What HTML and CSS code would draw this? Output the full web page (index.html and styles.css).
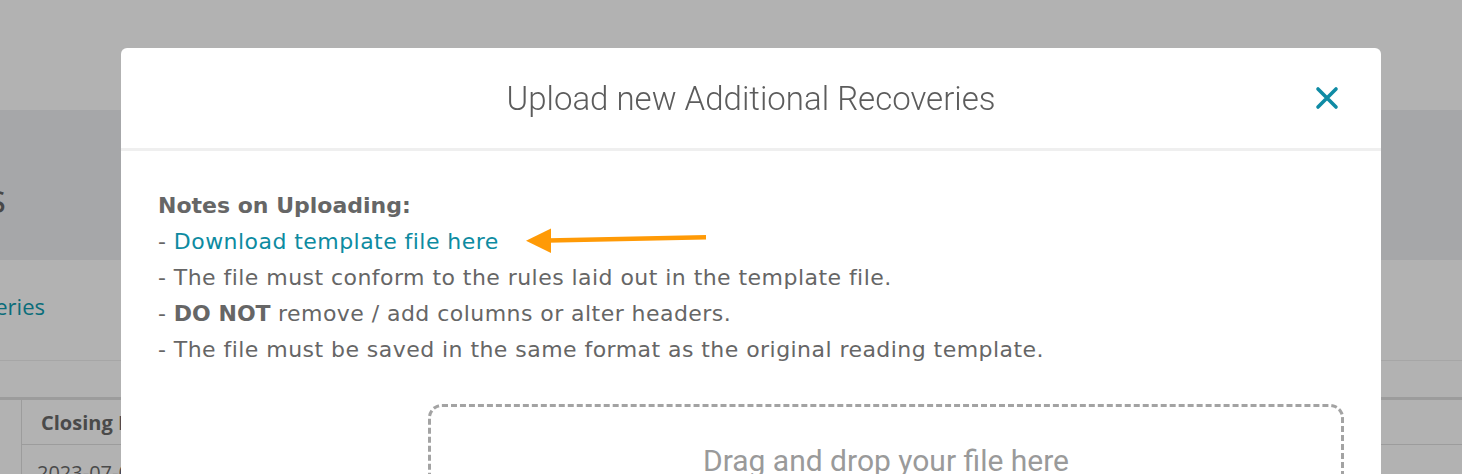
FILE: index.html
```html
<!DOCTYPE html>
<html lang="en">
<head>
<meta charset="utf-8">
<title>Upload new Additional Recoveries</title>
<link rel="stylesheet" href="styles.css">
</head>
<body>
<div class="page">
  <header class="topbar"></header>
  <section class="hero">
    <div class="clip"><h1 class="page-title">Additional Recoveries</h1></div>
  </section>
  <nav class="tabs">
    <div class="clip"><a class="tab-link" href="#">Additional Recoveries</a></div>
  </nav>
  <div class="spacer"></div>
  <table class="grid">
    <thead>
      <tr><th class="cell-first"></th><th class="cell-head">Closing Date</th></tr>
    </thead>
    <tbody>
      <tr><td class="cell-first"></td><td class="cell-body">2023-07-01</td></tr>
    </tbody>
  </table>
</div>

<div class="overlay"></div>

<div class="modal">
  <div class="modal-header">
    <h2 class="modal-title">Upload new Additional Recoveries</h2>
    <button class="close-btn" aria-label="Close">
      <svg width="24" height="24" viewBox="0 0 24 24"><path d="M3 3 L21 21 M21 3 L3 21" stroke="#0f8ba4" stroke-width="3.6" stroke-linecap="round" fill="none"/></svg>
    </button>
  </div>
  <div class="modal-body">
    <div class="notes">
      <div class="notes-title">Notes on Uploading:</div>
      <div class="note-line">- <a class="dl-link" href="#">Download template file here</a><svg class="arrow" width="184" height="28" viewBox="0 0 184 28"><path d="M22 14.6 L180 11.3" stroke="#ff9a06" stroke-width="4.5" fill="none"/><path d="M0 14.8 L25 2.5 L25 27 Z" fill="#ff9a06"/></svg></div>
      <div class="note-line">- The file must conform to the rules laid out in the template file.</div>
      <div class="note-line">- <strong>DO NOT</strong> remove / add columns or alter headers.</div>
      <div class="note-line">- The file must be saved in the same format as the original reading template.</div>
    </div>
    <div class="upload-row">
      <div></div>
      <div class="dropzone">Drag and drop your file here</div>
    </div>
  </div>
</div>
</body>
</html>
```

FILE: styles.css
```css
html, body {
  margin: 0;
  padding: 0;
  height: 100%;
  overflow: hidden;
  background: #ffffff;
}

body {
  font-family: "DejaVu Sans", "Open Sans", sans-serif;
}

.page {
  width: 100%;
}

.topbar {
  height: 110px;
  background: #ffffff;
}

.hero {
  height: 150px;
  background: #eef0f3;
  display: flex;
  align-items: center;
}

.clip {
  display: flex;
  justify-content: flex-end;
  white-space: nowrap;
}

.hero .clip {
  width: 6px;
}

.page-title {
  margin: 24px 0 0 0;
  font-family: "Open Sans", sans-serif;
  font-size: 40px;
  font-weight: 400;
  color: #676767;
}

.tabs {
  height: 100px;
  border-bottom: 1px solid #eeeeee;
  display: flex;
  align-items: center;
}

.tabs .clip {
  width: 45px;
}

.tab-link {
  margin-bottom: 8px;
  font-family: "Open Sans", sans-serif;
  font-size: 22px;
  color: #0f9db0;
  text-decoration: none;
}

.spacer {
  height: 36px;
}

.grid {
  width: 100%;
  border-collapse: collapse;
  border-top: 3px solid #e0e0e0;
}

.grid th, .grid td {
  text-align: left;
  padding: 0;
}

.cell-first {
  width: 21px;
  border-right: 1px solid #e0e0e0;
}

.cell-head {
  height: 44px;
  padding-left: 19px !important;
  font-family: "Open Sans", sans-serif;
  font-size: 20px;
  font-weight: 700;
  color: #6b6b6b;
  border-bottom: 1px solid #e0e0e0;
}

.cell-body {
  height: 44px;
  padding-left: 15px !important;
  padding-top: 14px !important;
  vertical-align: top;
  font-family: "Open Sans", sans-serif;
  font-size: 20px;
  color: #6b6b6b;
}

.overlay {
  position: fixed;
  inset: 0;
  background: rgba(0, 0, 0, 0.3);
}

.modal {
  position: fixed;
  left: 121px;
  top: 48px;
  width: 1260px;
  height: 520px;
  background: #ffffff;
  border-radius: 6px;
}

.modal-header {
  height: 100px;
  border-bottom: 3px solid #efefef;
  display: flex;
  align-items: center;
  justify-content: center;
  position: relative;
}

.modal-title {
  margin: 0;
  font-family: Roboto, "Liberation Sans", sans-serif;
  font-size: 33px;
  font-weight: 300;
  color: #5c5c5c;
}

.close-btn {
  position: absolute;
  right: 42px;
  top: 38px;
  width: 24px;
  height: 24px;
  padding: 0;
  border: 0;
  background: transparent;
  display: flex;
}

.modal-body {
  padding: 37px 37px 0 37px;
}

.notes {
  font-size: 22px;
  line-height: 36px;
  letter-spacing: 0.45px;
  color: #666666;
}

.notes-title {
  font-weight: 700;
  letter-spacing: 0;
}

.note-line strong {
  font-weight: 700;
  letter-spacing: 0;
}

.dl-link {
  color: #0d8ba1;
  text-decoration: none;
}

.arrow {
  margin-left: 27px;
  vertical-align: -5px;
}

.upload-row {
  display: grid;
  grid-template-columns: 1fr 916px;
  margin-top: 36px;
}

.dropzone {
  height: 200px;
  border: 3px dashed #a3a3a3;
  border-radius: 14px;
  box-sizing: border-box;
  padding-top: 36px;
  text-align: center;
  font-family: Roboto, "Liberation Sans", sans-serif;
  font-size: 30px;
  color: #9a9a9a;
}
```
